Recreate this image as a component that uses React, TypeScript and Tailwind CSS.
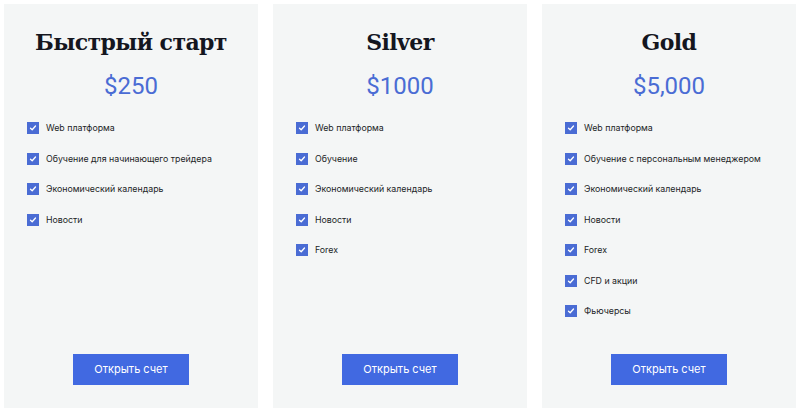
const plans = [
  {
    title: 'Быстрый старт',
    price: '$250',
    features: ['Web платформа', 'Обучение для начинающего трейдера', 'Экономический календарь', 'Новости'],
  },
  {
    title: 'Silver',
    price: '$1000',
    features: ['Web платформа', 'Обучение', 'Экономический календарь', 'Новости', 'Forex'],
  },
  {
    title: 'Gold',
    price: '$5,000',
    features: [
      'Web платформа',
      'Обучение с персональным менеджером',
      'Экономический календарь',
      'Новости',
      'Forex',
      'CFD и акции',
      'Фьючерсы',
    ],
  },
];

function Check() {
  return (
    <span className="w-[12px] h-[12px] bg-[#4a6cd4] flex items-center justify-center shrink-0">
      <svg width="8" height="8" viewBox="0 0 8 8" fill="none">
        <path d="M1.5 4.2 L3.2 5.8 L6.5 2" stroke="white" strokeWidth="1.3" strokeLinecap="round" strokeLinejoin="round" />
      </svg>
    </span>
  );
}

export default function App() {
  return (
    <div className="w-[800px] h-[412px] bg-white p-[4px] flex gap-[15px]">
      {plans.map((plan) => (
        <div key={plan.title} className="w-[254px] h-[404px] bg-[#f4f6f6] flex flex-col">
          <h2 className="mt-[22px] text-center text-[22px] leading-[32px] font-bold text-[#14161f] font-['DejaVu_Serif',serif] tracking-[-0.6px]">
            {plan.title}
          </h2>
          <div className="mt-[12px] text-center text-[24px] leading-[32px] text-[#4a6cd4] font-['Roboto',sans-serif]">
            {plan.price}
          </div>
          <ul className="mt-[20px] pl-[23px] flex flex-col gap-[18.5px] font-['Inter',sans-serif] text-[8.8px] leading-[12px] text-[#1c1e26]">
            {plan.features.map((f) => (
              <li key={f} className="flex items-center gap-[7px]">
                <Check />
                <span>{f}</span>
              </li>
            ))}
          </ul>
          <button className="mt-auto mb-[23px] mx-auto w-[116px] h-[31px] bg-[#4169e1] text-white text-[11px] font-['Inter',sans-serif]">
            Открыть счет
          </button>
        </div>
      ))}
    </div>
  );
}
